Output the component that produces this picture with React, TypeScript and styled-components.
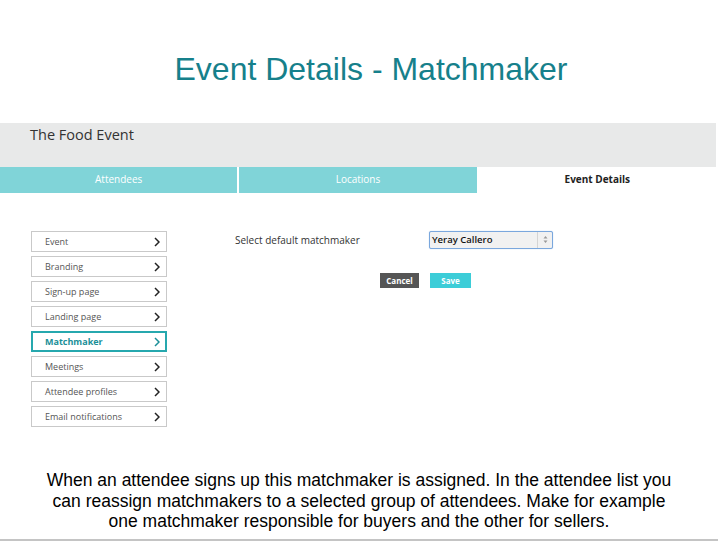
import styled, { createGlobalStyle } from "styled-components"

const GlobalStyle = createGlobalStyle`
    body {
        margin: 0;
        background: #fff;
    }
`

const Page = styled.div`
    width: 718px;
    height: 539px;
    border-bottom: 2px solid #c4c4c4;
    display: flex;
    flex-direction: column;
    overflow: hidden;

    & > * {
        flex-shrink: 0;
    }
`

const Title = styled.h1`
    margin: 0;
    padding: 52px 0 0 24px;
    height: 123px;
    box-sizing: border-box;
    text-align: center;
    font-family: "Liberation Sans", Arial, sans-serif;
    font-weight: 400;
    font-size: 32px;
    line-height: 34px;
    color: #16808b;
`

const EventBar = styled.div`
    background: #e8e9e9;
    width: 716px;
    display: flex;
    flex-direction: column;
`

const EventName = styled.div`
    height: 44px;
    box-sizing: border-box;
    padding: 1px 0 0 30px;
    font-family: "Open Sans", sans-serif;
    font-size: 14.5px;
    line-height: 22px;
    color: #333;
`

const Tabs = styled.div`
    display: flex;
    gap: 2px;
    height: 26px;
    background: #fff;
`

const Tab = styled.div<{ $active?: boolean }>`
    flex: 1;
    display: flex;
    align-items: center;
    justify-content: center;
    padding-bottom: 2px;
    font-family: "Open Sans", sans-serif;
    font-size: 10px;
    font-weight: ${props => props.$active ? 700 : 500};
    color: ${props => props.$active ? "#222" : "#fff"};
    background: ${props => props.$active ? "#fff" : "#80d4d8"};
`

const Content = styled.div`
    display: flex;
    padding: 38px 0 0 31px;
    height: 277px;
    box-sizing: border-box;
`

const SideMenu = styled.ul`
    list-style: none;
    margin: 0;
    padding: 0;
    width: 136px;
    display: flex;
    flex-direction: column;
    gap: 4px;
`

const MenuItem = styled.li<{ $active?: boolean }>`
    height: 21px;
    box-sizing: border-box;
    border: ${props => props.$active ? "2px solid #26a8ae" : "1px solid #c9c9c9"};
    display: flex;
    align-items: center;
    justify-content: space-between;
    padding: 0 ${props => props.$active ? "5px" : "6px"} 0 ${props => props.$active ? "12px" : "13px"};
    font-family: "Open Sans", sans-serif;
    font-size: 9px;
    font-weight: ${props => props.$active ? 700 : 400};
    color: ${props => props.$active ? "#1b8f98" : "#555"};
`

const Chevron = ({ color }: { color: string }) => (
    <svg width="6" height="10" viewBox="0 0 6 10">
        <path d="M1 1 L5 5 L1 9" fill="none" stroke={color} strokeWidth="1.5" />
    </svg>
)

const Form = styled.div`
    margin-left: 68px;
    display: flex;
    flex-direction: column;
`

const FieldRow = styled.div`
    display: flex;
    align-items: center;
    height: 17px;
`

const Label = styled.span`
    width: 194px;
    font-family: "Open Sans", sans-serif;
    font-size: 10px;
    color: #333;
`

const Select = styled.div`
    width: 124px;
    height: 18px;
    box-sizing: border-box;
    border: 1.5px solid #7aa7dd;
    border-radius: 2px;
    box-shadow: 0 0 1px #9cc0ec;
    background: #f1f1f1;
    display: flex;
    align-items: center;
    font-family: "Open Sans", sans-serif;
    font-size: 9.5px;
    font-weight: 600;
    color: #111;
`

const SelectValue = styled.span`
    flex: 1;
    padding-left: 2px;
`

const SelectArrows = styled.span`
    width: 14px;
    height: 100%;
    border-left: 1px solid #d4d4d4;
    display: flex;
    align-items: center;
    justify-content: center;
`

const Buttons = styled.div`
    display: flex;
    gap: 11px;
    margin: 25px 0 0 145px;
`

const Button = styled.button<{ $primary?: boolean }>`
    height: 15px;
    padding: 0;
    width: ${props => props.$primary ? "41px" : "39px"};
    border: none;
    background: ${props => props.$primary ? "#3ccdd8" : "#555"};
    color: #fff;
    font-family: "Open Sans", sans-serif;
    font-size: 8px;
    font-weight: 700;
`

const Footer = styled.p`
    margin: 0;
    text-align: center;
    font-family: "Liberation Sans", Arial, sans-serif;
    font-size: 17.5px;
    line-height: 20.5px;
    color: #000;
`

const menu = [
    "Event",
    "Branding",
    "Sign-up page",
    "Landing page",
    "Matchmaker",
    "Meetings",
    "Attendee profiles",
    "Email notifications",
]

export default function App() {
    return (
        <>
            <GlobalStyle />
            <Page>
                <Title>Event Details - Matchmaker</Title>
                <EventBar>
                    <EventName>The Food Event</EventName>
                    <Tabs>
                        <Tab>Attendees</Tab>
                        <Tab>Locations</Tab>
                        <Tab $active>Event Details</Tab>
                    </Tabs>
                </EventBar>
                <Content>
                    <SideMenu>
                        { menu.map(item => (
                            <MenuItem key={item} $active={item === "Matchmaker"}>
                                { item }
                                <Chevron color={item === "Matchmaker" ? "#1b8f98" : "#222"} />
                            </MenuItem>
                        )) }
                    </SideMenu>
                    <Form>
                        <FieldRow>
                            <Label>Select default matchmaker</Label>
                            <Select>
                                <SelectValue>Yeray Callero</SelectValue>
                                <SelectArrows>
                                    <svg width="5" height="9" viewBox="0 0 5 9">
                                        <path d="M0.5 3.5 L2.5 1 L4.5 3.5 Z M0.5 5.5 L2.5 8 L4.5 5.5 Z" fill="#999" />
                                    </svg>
                                </SelectArrows>
                            </Select>
                        </FieldRow>
                        <Buttons>
                            <Button>Cancel</Button>
                            <Button $primary>Save</Button>
                        </Buttons>
                    </Form>
                </Content>
                <Footer>
                    When an attendee signs up this matchmaker is assigned. In the attendee list you<br />
                    can reassign matchmakers to a selected group of attendees. Make for example<br />
                    one matchmaker responsible for buyers and the other for sellers.
                </Footer>
            </Page>
        </>
    )
}
